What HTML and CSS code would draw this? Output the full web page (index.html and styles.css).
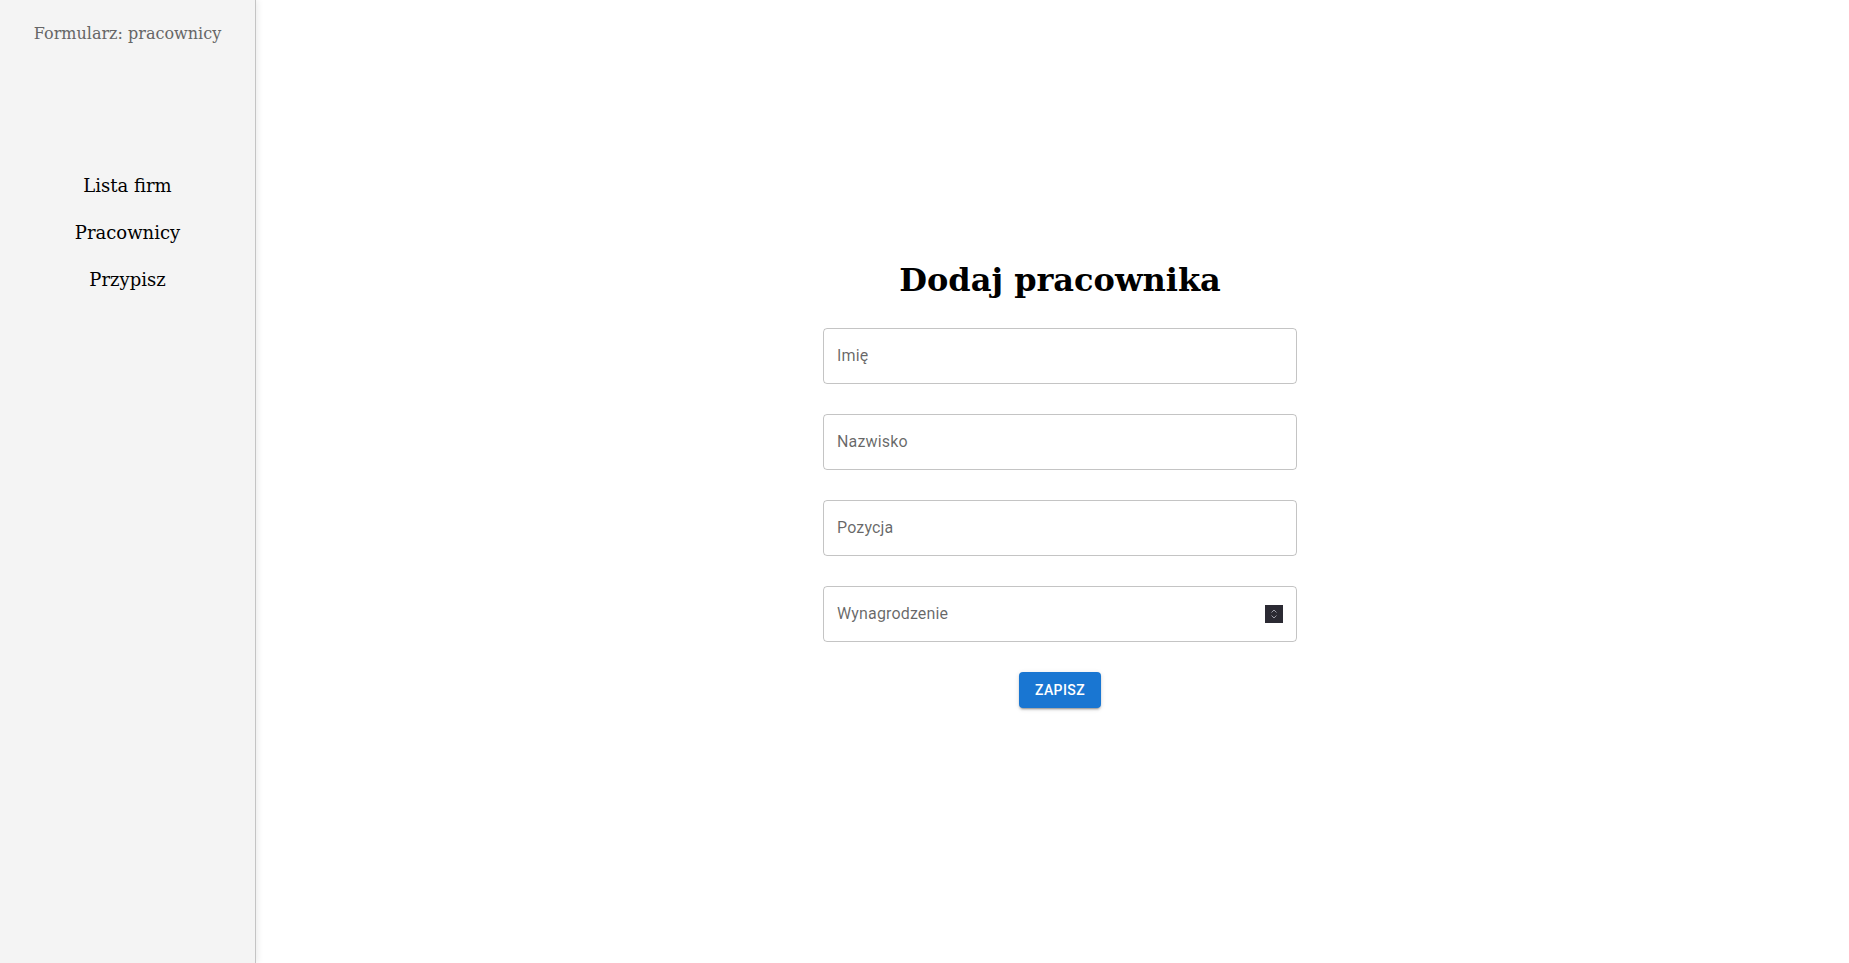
FILE: index.html
```html
<!DOCTYPE html>
<html lang="pl">
<head>
<meta charset="utf-8">
<title>Formularz: pracownicy</title>
<link rel="stylesheet" href="styles.css">
</head>
<body>
<div class="app">
  <aside class="sidebar">
    <div class="brand">Formularz: pracownicy</div>
    <nav class="nav">
      <a class="nav-item">Lista firm</a>
      <a class="nav-item">Pracownicy</a>
      <a class="nav-item">Przypisz</a>
    </nav>
  </aside>
  <main class="main">
    <form class="form">
      <h1 class="title">Dodaj pracownika</h1>
      <div class="field"><span class="label">Imię</span></div>
      <div class="field"><span class="label">Nazwisko</span></div>
      <div class="field"><span class="label">Pozycja</span></div>
      <div class="field"><span class="label">Wynagrodzenie</span>
        <span class="spin"><svg width="18" height="18" viewBox="0 0 18 18"><path d="M6.5 7.5 L9 5 L11.5 7.5" fill="none" stroke="#9a9aa5" stroke-width="1"/><path d="M6.5 10.5 L9 13 L11.5 10.5" fill="none" stroke="#9a9aa5" stroke-width="1"/></svg></span>
      </div>
      <div class="actions"><button type="button" class="btn">Zapisz</button></div>
    </form>
  </main>
</div>
</body>
</html>
```
FILE: styles.css
```css
* { box-sizing: border-box; }
html, body { margin: 0; padding: 0; height: 100%; }
body { background: #fff; font-family: "DejaVu Serif", serif; }
.app { display: flex; height: 100vh; }
.sidebar {
  width: 256px;
  flex: 0 0 256px;
  background: #f4f4f4;
  border-right: 1px solid #c4c4c4;
  box-shadow: 2px 0 6px rgba(0,0,0,0.08);
  display: flex;
  flex-direction: column;
  align-items: center;
  position: relative;
  z-index: 1;
}
.brand {
  margin-top: 22px;
  font-size: 16px;
  color: #666;
  line-height: 24px;
}
.nav {
  margin-top: 128px;
  display: flex;
  flex-direction: column;
  align-items: center;
  gap: 23px;
}
.nav-item {
  font-size: 18px;
  line-height: 24px;
  color: #000;
  cursor: pointer;
}
.main {
  flex: 1;
  display: flex;
  justify-content: center;
  align-items: center;
  padding-left: 15px;
}
.form {
  width: 474px;
  display: flex;
  flex-direction: column;
  gap: 30px;
  font-family: Roboto, "Liberation Sans", sans-serif;
  margin-top: 4px;
}
.title {
  margin: 0 0 -2px;
  text-align: center;
  font-family: "DejaVu Serif", serif;
  font-weight: bold;
  font-size: 32px;
  line-height: 40px;
  color: #000;
}
.field {
  height: 56px;
  border: 1px solid rgba(0,0,0,0.23);
  border-radius: 4px;
  display: flex;
  align-items: center;
  justify-content: space-between;
  padding: 0 13px 0 13px;
}
.label {
  font-size: 16px;
  color: rgba(0,0,0,0.6);
  letter-spacing: 0.00938em;
}
.spin {
  width: 18px;
  height: 18px;
  background: #2b2a33;
  display: block;
}
.spin svg { display: block; }
.actions { display: flex; justify-content: center; }
.btn {
  height: 36px;
  width: 82px;
  border: 0;
  border-radius: 4px;
  background: #1976d2;
  color: #fff;
  font-family: Roboto, "Liberation Sans", sans-serif;
  font-weight: 500;
  font-size: 14px;
  letter-spacing: 0.02857em;
  text-transform: uppercase;
  box-shadow: 0 3px 1px -2px rgba(0,0,0,0.2), 0 2px 2px 0 rgba(0,0,0,0.14), 0 1px 5px 0 rgba(0,0,0,0.12);
  cursor: pointer;
}
```
